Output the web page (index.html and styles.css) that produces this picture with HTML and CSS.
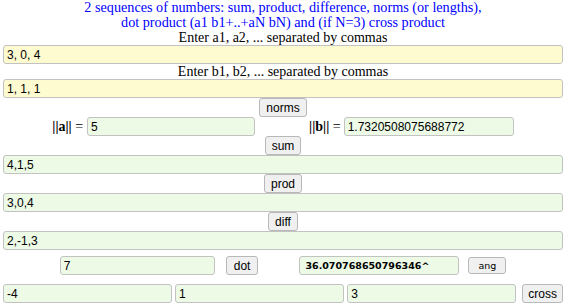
FILE: index.html
```html
<!DOCTYPE html>
<html lang="en">
<head>
  <meta charset="UTF-8">
  <meta name="viewport" content="width=device-width, initial-scale=1.0">
  <title>Vector operations</title>
  <link rel="stylesheet" href="styles.css">
</head>
<body>
  <div class="title">
    2 sequences of numbers: sum, product, difference, norms (or lengths),<br>
    dot product (a1 b1+..+aN bN) and (if N=3) cross product
  </div>

  <div class="label">Enter a1, a2, ... separated by commas</div>
  <input class="field seq" type="text" id="a" value="3, 0, 4">

  <div class="label">Enter b1, b2, ... separated by commas</div>
  <input class="field seq" type="text" id="b" value="1, 1, 1">

  <div class="center"><button class="btn">norms</button></div>
  <div class="norm-row">
    <span class="norm-label"><b>||a||</b> =</span>
    <input class="field res norm-a" type="text" value="5">
    <span class="norm-label norm-label-b"><b>||b||</b> =</span>
    <input class="field res norm-b" type="text" value="1.7320508075688772">
  </div>

  <div class="center"><button class="btn">sum</button></div>
  <input class="field res" type="text" value="4,1,5">

  <div class="center"><button class="btn">prod</button></div>
  <input class="field res" type="text" value="3,0,4">

  <div class="center"><button class="btn">diff</button></div>
  <input class="field res" type="text" value="2,-1,3">

  <div class="dot-row">
    <input class="field res dot-out" type="text" value="7">
    <button class="btn dot-btn">dot</button>
    <input class="field res ang-out" type="text" value="36.070768650796346^">
    <button class="btn ang-btn">ang</button>
  </div>

  <div class="cross-row">
    <input class="field res" type="text" value="-4">
    <input class="field res" type="text" value="1">
    <input class="field res" type="text" value="3">
    <button class="btn cross-btn">cross</button>
  </div>
</body>
</html>
```

FILE: styles.css
```css
body {
  margin: 0;
  padding: 0 3px;
  font-family: 'Liberation Serif', 'Times New Roman', serif;
  color: #000;
  background: #fff;
}

.title {
  color: #0000ff;
  font-size: 14.2px;
  line-height: 15px;
  text-align: center;
}

.label {
  font-size: 14px;
  line-height: 15px;
  text-align: center;
}

.field {
  display: block;
  box-sizing: border-box;
  width: 100%;
  height: 19px;
  margin: 0;
  padding: 0 3px;
  border: 1px solid #c2c2c2;
  border-radius: 3px;
  font-family: 'Liberation Sans', Arial, sans-serif;
  font-size: 12px;
  color: #000;
}

.seq {
  background: #fffbd0;
}

.res {
  background: #ecfae6;
}

.center {
  display: flex;
  justify-content: center;
}

.btn {
  box-sizing: border-box;
  height: 19px;
  margin: 0;
  padding: 0 6px;
  border: 1px solid #b8b8b8;
  border-radius: 3px;
  background: #f0f0f0;
  font-family: 'Liberation Sans', Arial, sans-serif;
  font-size: 12px;
  color: #000;
}

.norm-row {
  display: flex;
  justify-content: center;
  align-items: center;
}

.norm-label {
  font-size: 14px;
  margin-right: 4px;
}

.norm-label-b {
  margin-left: 54px;
  margin-right: 3px;
}

.norm-a {
  width: 168px;
}

.norm-b {
  width: 170px;
}

.dot-row {
  display: flex;
  justify-content: center;
  align-items: center;
  margin-top: 6px;
}

.dot-out {
  width: 155px;
}

.dot-btn {
  margin-left: 11px;
  padding: 0 7px;
}

.ang-out {
  width: 160px;
  margin-left: 41px;
  font-family: 'DejaVu Sans', Verdana, sans-serif;
  font-weight: bold;
  font-size: 9.5px;
  padding-left: 5px;
}

.ang-btn {
  margin-left: 9px;
  height: 17px;
  padding: 0 9px;
  font-family: 'DejaVu Sans', Verdana, sans-serif;
  font-size: 9.5px;
}

.cross-row {
  display: flex;
  align-items: center;
  gap: 3px;
  margin-top: 9px;
}

.cross-row .field {
  flex: 1;
  min-width: 0;
}

.cross-btn {
  margin-left: 3px;
  padding: 0 5px;
}
```
